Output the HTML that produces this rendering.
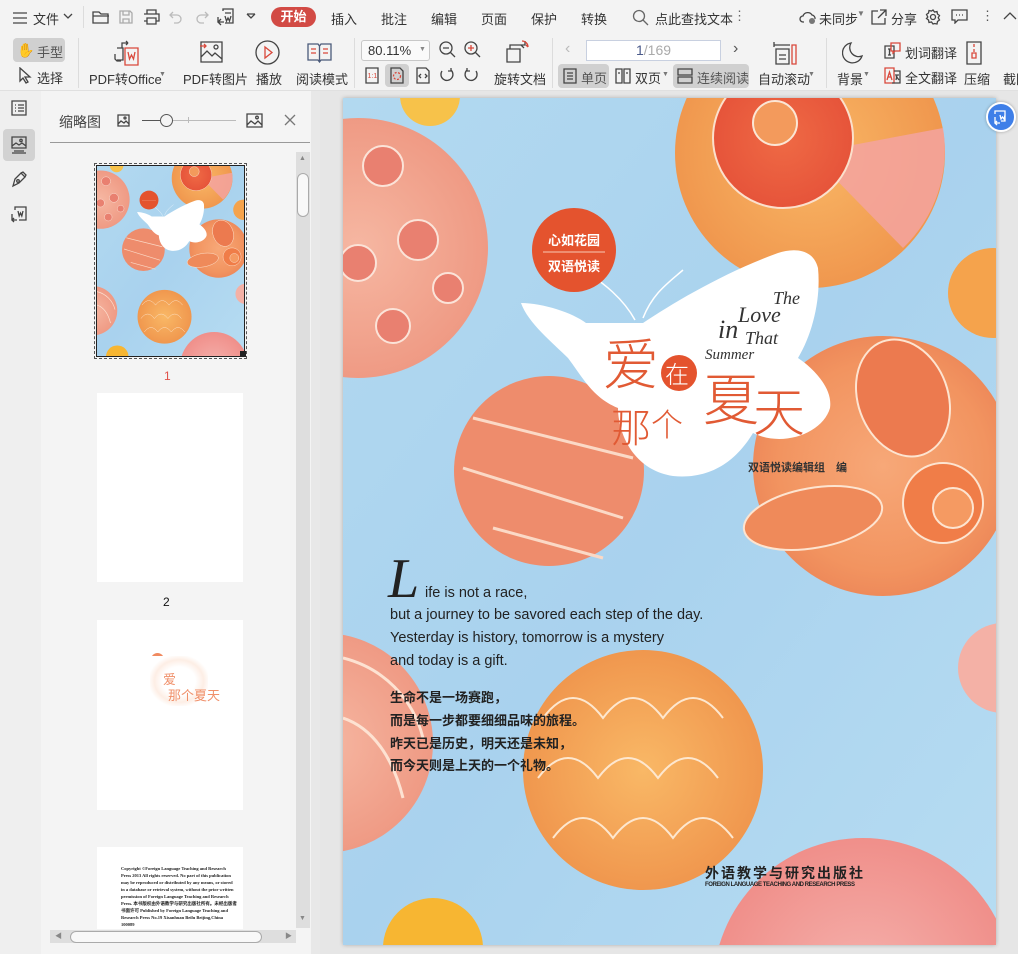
<!DOCTYPE html>
<html style="overflow:hidden"><head><meta charset="utf-8">
<style>
*{margin:0;padding:0;box-sizing:border-box}
body{width:1018px;height:954px;overflow:hidden;background:#e6e6e6;font-family:"Liberation Sans","Noto Sans CJK SC",sans-serif;font-size:13px;color:#333;position:relative}
.a{position:absolute;white-space:nowrap}
#top{position:absolute;left:0;top:0;width:1018px;height:91px;background:#f3f3f3;border-bottom:1px solid #e0e0e0}
.sep{position:absolute;width:1px;background:#dcdcdc}
.btnsel{position:absolute;background:#d0d0d0;border-radius:4px}
svg.i{position:absolute;fill:none;stroke:#444;stroke-width:1.3}
</style></head><body>
<div id="top">
  <svg class="i" style="left:12px;top:11px" width="16" height="14"><path d="M1 2h14M1 7h14M1 12h14"/></svg>
  <div class="a" style="left:33px;top:9px">文件</div>
  <svg class="i" style="left:63px;top:13px" width="10" height="8"><path d="M1 1l4 4 4-4"/></svg>
  <div class="sep" style="left:83px;top:6px;height:22px"></div>
  <svg class="i" style="left:92px;top:9px" width="18" height="16"><path d="M1 3h6l2 2h7v9H1z M1 7h16"/></svg>
  <svg class="i" style="left:118px;top:9px;stroke:#aaa" width="16" height="16"><path d="M2 2h10l2 2v10H2z M5 2v4h6V2 M5 14v-4h6v4"/></svg>
  <svg class="i" style="left:143px;top:9px" width="17" height="16"><path d="M4 5V1h9v4 M1 5h15v7h-3 M4 12H1 M4 9h9v6H4z"/></svg>
  <svg class="i" style="left:169px;top:10px;stroke:#bbb" width="14" height="14"><path d="M4 2L1 5l3 3M1 5h7a4 4 0 010 8H5"/></svg>
  <svg class="i" style="left:195px;top:10px;stroke:#bbb" width="14" height="14"><path d="M10 2l3 3-3 3M13 5H6a4 4 0 000 8h3"/></svg>
  <svg class="i" style="left:217px;top:8px" width="18" height="18"><path d="M6 3V1h10v14H8 M8 5h6 M8 8l1.5 5 1.5-3 1.5 3 1.5-5 M1 9v5h6 M4 11l-3 3 3 3"/></svg>
  <svg class="i" style="left:246px;top:13px" width="10" height="8"><path d="M1 1l4 4 4-4M1 1h8"/></svg>
  <div class="a" style="left:271px;top:7px;width:45px;height:20px;border-radius:10px;background:#d24a44;color:#fff;text-align:center;line-height:20px;font-weight:bold">开始</div>
  <div class="a" style="left:331px;top:9px">插入</div>
  <div class="a" style="left:381px;top:9px">批注</div>
  <div class="a" style="left:431px;top:9px">编辑</div>
  <div class="a" style="left:481px;top:9px">页面</div>
  <div class="a" style="left:531px;top:9px">保护</div>
  <div class="a" style="left:581px;top:9px">转换</div>
  <svg class="i" style="left:632px;top:9px;stroke:#666" width="17" height="17"><circle cx="7" cy="7" r="5.5"/><path d="M11 11l5 5"/></svg>
  <div class="a" style="left:655px;top:9px">点此查找文本</div>
  <div class="a" style="left:733px;top:8px;color:#666">⋮</div>
  <svg class="i" style="left:799px;top:9px" width="20" height="16"><path d="M5 13H4a3 3 0 010-6 5 5 0 019-1 3.5 3.5 0 013 4"/><circle cx="13" cy="12" r="3" fill="#777" stroke="none"/></svg>
  <div class="a" style="left:819px;top:9px">未同步</div>
  <div class="a" style="left:857px;top:9px;font-size:8px;color:#777">▼</div>
  <svg class="i" style="left:871px;top:9px" width="16" height="16"><path d="M7 2H1v13h13V9 M9 1h6v6 M15 1L7 9"/></svg>
  <div class="a" style="left:891px;top:9px">分享</div>
  <svg class="i" style="left:925px;top:9px" width="16" height="16"><circle cx="8" cy="8" r="2.5"/><path d="M8 1l1.5 2 2.5-.5.5 2.5 2 1.5-1.3 2.2 1.3 2.3-2 1.5-.5 2.5-2.5-.5L8 15l-1.5-2-2.5.5-.5-2.5-2-1.5L2.8 8 1.5 5.5l2-1.5.5-2.5 2.5.5z"/></svg>
  <svg class="i" style="left:951px;top:9px" width="17" height="15"><path d="M1 1h15v10H7l-3 3v-3H1z M5 6h1M8 6h1M11 6h1"/></svg>
  <div class="a" style="left:981px;top:8px;color:#555">⋮</div>
  <svg class="i" style="left:1003px;top:11px" width="15" height="10"><path d="M1 8l6-6 6 6"/></svg>

  <div class="btnsel" style="left:13px;top:38px;width:52px;height:24px"></div>
  <div class="a" style="left:17px;top:42px;font-size:14px">✋</div>
  <div class="a" style="left:37px;top:42px;color:#555">手型</div>
  <svg class="i" style="left:18px;top:67px" width="14" height="17"><path d="M2 1l10 9H7l3 5-2 1-3-5-3 3z"/></svg>
  <div class="a" style="left:37px;top:68px">选择</div>
  <div class="sep" style="left:78px;top:38px;height:50px"></div>
  <svg class="i" style="left:114px;top:40px" width="28" height="26"><path d="M8 8V3h6M14 3l-2-2M14 3l-2 2 M3 8h6v12H3 M1 14v5l2 2h4" /><path d="M11 8h13v17H11z M14 12l1.5 7 2-4 2 4 1.5-7" stroke="#d9483b"/></svg>
  <div class="a" style="left:89px;top:69px">PDF转Office</div>
  <div class="a" style="left:159px;top:71px;font-size:7px;color:#777">▼</div>
  <svg class="i" style="left:200px;top:41px" width="24" height="22"><path d="M1 1h21v20H1z M1 16l6-6 5 5 3-3 7 6"/><circle cx="16" cy="6" r="2"/><path d="M0 5h6M4 3l2 2-2 2" stroke="#d9483b"/></svg>
  <div class="a" style="left:183px;top:69px">PDF转图片</div>
  <svg class="i" style="left:255px;top:40px" width="25" height="25"><circle cx="12.5" cy="12.5" r="11.5"/><path d="M10 7l7 5.5-7 5.5z" stroke="#d9483b"/></svg>
  <div class="a" style="left:256px;top:69px">播放</div>
  <svg class="i" style="left:307px;top:43px;stroke:#4a5a7a" width="25" height="20"><path d="M1 1h10l1.5 2L14 1h10v16H14l-1.5 2L11 17H1z M12.5 3v16"/><path d="M4 6h5M4 10h5M16 6h5M16 10h5" stroke="#d9483b"/></svg>
  <div class="a" style="left:296px;top:69px">阅读模式</div>
  <div class="sep" style="left:354px;top:38px;height:50px"></div>
  <div class="a" style="left:361px;top:40px;width:69px;height:21px;border:1px solid #c8c8c8;border-radius:3px;background:#fafafa;line-height:19px;padding-left:6px">80.11%</div>
  <div class="a" style="left:419px;top:46px;font-size:7px;color:#888">▼</div>
  <svg class="i" style="left:439px;top:41px" width="17" height="17"><circle cx="7" cy="7" r="6"/><path d="M11 11l5 5M4 7h6" /></svg>
  <svg class="i" style="left:464px;top:41px" width="17" height="17"><circle cx="7" cy="7" r="6"/><path d="M11 11l5 5"/><path d="M4 7h6M7 4v6" stroke="#d9483b"/></svg>
  <div class="btnsel" style="left:385px;top:64px;width:24px;height:23px"></div>
  <svg class="i" style="left:365px;top:67px" width="14" height="17"><path d="M1 1h12v15H1z"/><text x="2.5" y="11" font-size="7" fill="#d9483b" stroke="none" font-family="Liberation Sans">1:1</text></svg>
  <svg class="i" style="left:390px;top:67px" width="14" height="17"><path d="M1 1h9l3 3v12H1z"/><circle cx="7" cy="9" r="3.5" stroke="#d9483b" stroke-dasharray="2 1.5"/></svg>
  <svg class="i" style="left:416px;top:67px" width="14" height="17"><path d="M1 1h9l3 3v12H1z M5 7l-2 2 2 2M9 7l2 2-2 2" /></svg>
  <svg class="i" style="left:439px;top:67px" width="16" height="16"><path d="M3 4a6 6 0 109-1M12 1v3h-3"/></svg>
  <svg class="i" style="left:463px;top:67px" width="16" height="16"><path d="M13 4a6 6 0 11-9-1M4 1v3h3"/></svg>
  <svg class="i" style="left:505px;top:40px" width="25" height="24"><path d="M2 9h13v13H2z M5 9V5h11l3 3 M20 1v4h-4"/><path d="M17 1a6 6 0 016 6M23 7l-2-2" stroke="#d9483b"/></svg>
  <div class="a" style="left:494px;top:69px">旋转文档</div>
  <div class="sep" style="left:552px;top:38px;height:50px"></div>
  <div class="a" style="left:565px;top:40px;color:#bbb;font-size:16px">‹</div>
  <div class="a" style="left:586px;top:40px;width:135px;height:21px;border:1px solid #c8d0e0;background:#fff;text-align:center;line-height:19px;font-size:14px;color:#4a5a8a">1<span style="color:#aaa">/169</span></div>
  <div class="a" style="left:733px;top:40px;color:#555;font-size:16px">›</div>
  <div class="btnsel" style="left:558px;top:64px;width:51px;height:24px"></div>
  <svg class="i" style="left:563px;top:68px" width="14" height="16"><path d="M1 1h12v14H1z M4 5h6M4 8h6M4 11h6"/></svg>
  <div class="a" style="left:581px;top:68px;color:#555">单页</div>
  <svg class="i" style="left:615px;top:68px" width="16" height="16"><path d="M1 1h6v14H1z M9 1h6v14H9z M3 5h2M11 5h2"/></svg>
  <div class="a" style="left:635px;top:68px">双页</div>
  <div class="a" style="left:662px;top:71px;font-size:7px;color:#777">▼</div>
  <div class="btnsel" style="left:673px;top:64px;width:76px;height:24px"></div>
  <svg class="i" style="left:677px;top:68px" width="16" height="16"><path d="M1 1h14v6H1z M1 9h14v6H1z"/></svg>
  <div class="a" style="left:697px;top:68px;color:#555">连续阅读</div>
  <svg class="i" style="left:773px;top:41px" width="24" height="24"><path d="M1 4h16 M1 1v5 M3 8h13v15H3z M6 14h7M6 18h7"/><path d="M19 4h4v19h-4z" stroke="#d9483b"/></svg>
  <div class="a" style="left:758px;top:69px">自动滚动</div>
  <div class="a" style="left:808px;top:71px;font-size:7px;color:#777">▼</div>
  <div class="sep" style="left:826px;top:38px;height:50px"></div>
  <svg class="i" style="left:842px;top:42px" width="22" height="22"><path d="M9 1a10 10 0 1011 13A9 9 0 019 1z"/></svg>
  <div class="a" style="left:837px;top:69px">背景</div>
  <div class="a" style="left:863px;top:71px;font-size:7px;color:#777">▼</div>
  <svg class="i" style="left:884px;top:42px" width="17" height="17"><path d="M1 4h9v12H1z M4 7h3M5.5 7v6M4 13h3"/><path d="M7 1h9v8h-5l-2 2V9H7z" stroke="#d9483b"/></svg>
  <div class="a" style="left:905px;top:43px">划词翻译</div>
  <svg class="i" style="left:884px;top:67px" width="17" height="17"><path d="M1 1h9v15H1z M3 13l2.5-8 2.5 8M4 10h3" stroke="#d9483b"/><path d="M10 4h6v12H8 M11 8h4M13 8l-1 5M12 9l3 4"/></svg>
  <div class="a" style="left:905px;top:68px">全文翻译</div>
  <svg class="i" style="left:966px;top:41px" width="16" height="24"><path d="M1 1h14v22H1z"/><path d="M8 3v3M8 8v3M6 12h4v5H6z" stroke="#d9483b"/></svg>
  <div class="a" style="left:964px;top:69px">压缩</div>
  <div class="a" style="left:1003px;top:69px">截图</div>
</div>

<div class="a" style="left:0;top:91px;width:41px;height:863px;background:#efefef"></div>
<svg class="i" style="left:11px;top:100px" width="16" height="16"><path d="M1 1h14v14H1z M4 5h1M7 5h6M4 8h1M7 8h6M4 11h1M7 11h6"/></svg>
<div class="btnsel" style="left:3px;top:129px;width:32px;height:32px;background:#d2d2d2"></div>
<svg class="i" style="left:11px;top:136px" width="16" height="18"><path d="M1 1h14v11H1z M1 10l4-3 3 2 3-2 4 3 M3 15h10 M1 17h14"/><circle cx="10" cy="4.5" r="1.2"/></svg>
<svg class="i" style="left:11px;top:171px" width="16" height="17"><path d="M2 15l2-7 6-6 4 4-6 6z M10 2l2-1 3 3-1 2"/><circle cx="7" cy="10" r="1.3"/></svg>
<svg class="i" style="left:11px;top:206px" width="16" height="17"><path d="M4 4V1h11v13H8 M7 5l1.2 5 1.3-3 1.3 3 1.2-5 M1 8v6h5 M3 12l-2 2 2 2"/></svg>

<div class="a" style="left:41px;top:91px;width:270px;height:863px;background:#f4f4f4"></div>
<div class="a" style="left:59px;top:112px;font-size:14px;color:#444">缩略图</div>
<svg class="i" style="left:117px;top:114px" width="13" height="13"><path d="M1 1h11v11H1z M1 10l3-3 3 2 2-2 3 3"/><circle cx="8" cy="4" r="1"/></svg>
<div class="a" style="left:142px;top:120px;width:94px;height:1px;background:#bbb"></div>
<div class="a" style="left:142px;top:120px;width:20px;height:1px;background:#555"></div>
<div class="a" style="left:160px;top:114px;width:13px;height:13px;border:1px solid #555;border-radius:50%;background:#f4f4f4"></div>
<div class="a" style="left:188px;top:117px;width:1px;height:6px;background:#bbb"></div>
<svg class="i" style="left:246px;top:113px" width="17" height="15"><path d="M1 1h15v13H1z M1 12l4-4 4 3 3-3 4 4"/><circle cx="11" cy="4.5" r="1.3"/></svg>
<svg class="i" style="left:284px;top:114px;stroke:#777" width="12" height="12"><path d="M1 1l10 10M11 1L1 11"/></svg>
<div class="a" style="left:50px;top:142px;width:260px;height:1px;background:#999"></div>

<div class="a" style="left:94px;top:163px;width:153px;height:196px;border:1px dashed #555"></div>
<div class="a" style="left:96px;top:165px;width:149px;height:192px;border:1px solid #222;overflow:hidden">
<svg width="147" height="190" viewBox="0 0 653 847" preserveAspectRatio="none"><use href="#cv"/></svg>
</div>
<div class="a" style="left:240px;top:351px;width:6px;height:6px;background:#222"></div>
<div class="a" style="left:164px;top:369px;color:#e0524a;font-size:12px">1</div>
<div class="a" style="left:97px;top:393px;width:146px;height:189px;background:#fff"></div>
<div class="a" style="left:163px;top:595px;font-size:12px;color:#111">2</div>
<div class="a" style="left:97px;top:620px;width:146px;height:190px;background:#fff"></div>
<div class="a" style="left:151px;top:653px;width:13px;height:13px;border-radius:50%;background:#f08a60"></div>
<div class="a" style="left:150px;top:656px;width:58px;height:50px;background:radial-gradient(ellipse,#fff 40%,#fdeee5 60%,#fff 75%)"></div>
<div class="a" style="left:163px;top:672px;font-size:13px;color:#f0906a;line-height:16px">爱<br><span style="margin-left:5px">那个夏天</span></div>
<div class="a" style="left:97px;top:847px;width:146px;height:82px;background:#fff;overflow:hidden;font-family:'Liberation Serif',serif;font-size:4.5px;font-weight:bold;color:#222;line-height:7px;padding:18px 6px 0 24px;white-space:normal">Copyright ©Foreign Language Teaching and Research Press 2013 All rights reserved. No part of this publication may be reproduced or distributed by any means, or stored in a database or retrieval system, without the prior written permission of Foreign Language Teaching and Research Press. 本书版权由外语教学与研究出版社所有。未经出版者书面许可 Published by Foreign Language Teaching and Research Press No.19 Xisanhuan Beilu Beijing,China 100089</div>
<div class="a" style="left:296px;top:152px;width:14px;height:776px;background:#dedede"></div>
<div class="a" style="left:297px;top:173px;width:12px;height:44px;border:1px solid #aaa;border-radius:6px;background:#f8f8f8"></div>
<div class="a" style="left:299px;top:155px;font-size:7px;color:#888">▲</div>
<div class="a" style="left:299px;top:915px;font-size:7px;color:#888">▼</div>
<div class="a" style="left:50px;top:930px;width:246px;height:13px;background:#dedede"></div>
<div class="a" style="left:70px;top:931px;width:192px;height:12px;border:1px solid #aaa;border-radius:6px;background:#f8f8f8"></div>
<div class="a" style="left:55px;top:931px;font-size:7px;color:#888">◀</div>
<div class="a" style="left:285px;top:931px;font-size:7px;color:#888">▶</div>
<div class="a" style="left:311px;top:91px;width:9px;height:863px;background:#e8e8e8"></div>

<div class="a" style="left:320px;top:91px;width:698px;height:863px;background:#e6e6e6"></div>
<svg class="a" style="left:343px;top:98px;box-shadow:0 0 4px rgba(0,0,0,.25)" width="653" height="847" viewBox="0 0 653 847">
<defs>
<radialGradient id="po"><stop offset="0" stop-color="#f7a878"/><stop offset=".8" stop-color="#f29460"/><stop offset="1" stop-color="#ee8a5a"/></radialGradient>
<radialGradient id="pk"><stop offset="0" stop-color="#f6b7a2"/><stop offset="1" stop-color="#ef9a84"/></radialGradient>
<radialGradient id="yo"><stop offset="0" stop-color="#f9b866"/><stop offset="1" stop-color="#f0974e"/></radialGradient>
<radialGradient id="rd"><stop offset="0" stop-color="#ef6a45"/><stop offset="1" stop-color="#e6543a"/></radialGradient>
<radialGradient id="pink2"><stop offset="0" stop-color="#f5b2ad"/><stop offset="1" stop-color="#f08f8a"/></radialGradient>
<linearGradient id="sky" x1="0" y1="0" x2="1" y2="1"><stop offset="0" stop-color="#b2d9f0"/><stop offset=".5" stop-color="#a9d2ee"/><stop offset="1" stop-color="#b6dcf2"/></linearGradient>
<g id="cv">
<rect width="653" height="847" fill="url(#sky)"/>
<circle cx="87" cy="-2" r="30" fill="#f7c24a"/>
<circle cx="15" cy="150" r="130" fill="url(#pk)"/>
<g fill="#e98070" stroke="#fbe3d8" stroke-width="2"><circle cx="40" cy="68" r="20"/><circle cx="75" cy="142" r="20"/><circle cx="15" cy="165" r="18"/><circle cx="105" cy="190" r="15"/><circle cx="50" cy="228" r="17"/></g>
<circle cx="467" cy="55" r="135" fill="url(#yo)"/>
<path d="M467 55 L600 30 A135 135 0 0 1 560 150z" fill="#f3a3a0" opacity=".85"/>
<circle cx="440" cy="40" r="70" fill="url(#rd)" stroke="#fbe0cc" stroke-width="2"/>
<circle cx="432" cy="25" r="22" fill="#f39a5c" stroke="#fbe6d5" stroke-width="2"/>
<circle cx="650" cy="195" r="45" fill="#f5a34c"/>
<circle cx="540" cy="368" r="130" fill="url(#po)"/>
<ellipse cx="560" cy="300" rx="45" ry="60" fill="#ec7a4f" stroke="#fde4d0" stroke-width="2" transform="rotate(-20 560 300)"/>
<ellipse cx="470" cy="420" rx="70" ry="30" fill="#ef8a5a" stroke="#fde4d0" stroke-width="2" transform="rotate(-10 470 420)"/>
<circle cx="600" cy="405" r="40" fill="#f07d48" stroke="#fde4d0" stroke-width="2"/>
<circle cx="610" cy="410" r="20" fill="#f59a62" stroke="#fde4d0" stroke-width="2"/>
<circle cx="206" cy="373" r="95" fill="#ee8c6c"/>
<path d="M130 320 L290 360 M120 370 L280 420 M150 430 L260 460" stroke="#fbd9c6" stroke-width="3" fill="none"/>
<circle cx="-20" cy="645" r="110" fill="url(#pk)"/>
<path d="M0 560 C40 570 70 600 80 640 M0 620 C30 630 50 660 60 700" stroke="#fde2d2" stroke-width="3" fill="none"/>
<circle cx="660" cy="570" r="45" fill="#f4b1a6"/>
<circle cx="300" cy="672" r="120" fill="url(#yo)"/>
<g stroke="#fde7cf" stroke-width="2" fill="none"><path d="M200 620 q30 -40 60 0 q30 -40 60 0 q30 -40 60 0 M195 680 q30 -40 60 0 q30 -40 60 0 q30 -40 60 0 M210 740 q30 -40 60 0 q30 -40 60 0 q30 -40 60 0"/></g>
<circle cx="520" cy="890" r="150" fill="url(#pink2)"/>
<circle cx="90" cy="850" r="50" fill="#f7b632"/>
<path d="M243 225 C230 215 200 205 178 205 C185 225 210 245 225 260 C240 280 250 300 275 310 C275 335 290 372 330 378 C370 382 395 360 410 335 C440 350 480 335 487 310 C490 290 470 270 455 260 C470 235 478 200 475 170 C470 150 450 150 435 155 C380 175 330 205 300 225 Z" fill="#fff"/>
<path d="M292 222 C280 200 260 185 245 175 M300 220 C310 195 325 185 340 172" stroke="#fff" stroke-width="1.5" fill="none"/>
<circle cx="231" cy="152" r="42" fill="#e4532e"/>
<line x1="200" y1="154" x2="262" y2="154" stroke="#f9c8b4" stroke-width="1"/>
</g>
</defs>
<use href="#cv"/>
<g font-family="Liberation Sans,Noto Sans CJK SC,sans-serif">
<text x="231" y="147" text-anchor="middle" font-size="13" font-weight="bold" fill="#fff" font-family="Noto Sans CJK SC,sans-serif">心如花园</text>
<text x="231" y="173" text-anchor="middle" font-size="13" font-weight="bold" fill="#fff" font-family="Noto Sans CJK SC,sans-serif">双语悦读</text>
<g font-family="Liberation Serif,serif" font-style="italic" fill="#333">
<text x="430" y="206" font-size="18">The</text>
<text x="395" y="224" font-size="22">Love</text>
<text x="375" y="240" font-size="26">in</text>
<text x="402" y="246" font-size="18">That</text>
<text x="362" y="261" font-size="15">Summer</text>
</g>
<g fill="#e15a34" font-family="Noto Sans CJK SC,sans-serif" font-weight="300">
<text x="260" y="287" font-size="56">爱</text>
<circle cx="336" cy="275" r="18" fill="#e4532e"/>
<text x="322" y="285" font-size="24" fill="#fff">在</text>
<text x="268" y="344" font-size="40">那</text>
<text x="308" y="338" font-size="32">个</text>
<text x="360" y="322" font-size="56">夏</text>
<text x="410" y="333" font-size="52">天</text>
</g>
<text x="405" y="373" font-size="11" fill="#333" font-family="Noto Sans CJK SC,sans-serif" font-weight="bold">双语悦读编辑组　编</text>
<text x="45" y="499" font-size="56" font-family="Liberation Serif,serif" font-style="italic" fill="#222">L</text>
<g font-size="14.5" fill="#222">
<text x="82" y="499">ife is not a race,</text>
<text x="47" y="521">but a journey to be savored each step of the day.</text>
<text x="47" y="544">Yesterday is history, tomorrow is a mystery</text>
<text x="47" y="567">and today is a gift.</text>
</g>
<g font-size="13" fill="#222" font-family="Noto Sans CJK SC,sans-serif" font-weight="bold">
<text x="47" y="604">生命不是一场赛跑，</text>
<text x="47" y="627">而是每一步都要细细品味的旅程。</text>
<text x="47" y="650">昨天已是历史，明天还是未知，</text>
<text x="47" y="672">而今天则是上天的一个礼物。</text>
</g>
<text x="362" y="780" font-size="14" font-weight="bold" fill="#222" letter-spacing="2" font-family="Noto Sans CJK SC,sans-serif">外语教学与研究出版社</text>
<text x="362" y="788" font-size="6" font-weight="bold" fill="#222" textLength="150">FOREIGN LANGUAGE TEACHING AND RESEARCH PRESS</text>
</g>
</svg>
<div class="a" style="left:986px;top:102px;width:30px;height:30px;border-radius:50%;background:#3f7fe8;border:2px solid #fff;box-shadow:0 0 3px rgba(0,0,0,.3)"></div>
<svg class="i" style="left:992px;top:108px;stroke:#fff" width="18" height="18"><path d="M3 6V3h10v10H9 M3 9v6h5 M5 13l-2 2 2 2 M8 7l1 4 1.5-2 1.5 2 1-4"/></svg>
</body></html>
